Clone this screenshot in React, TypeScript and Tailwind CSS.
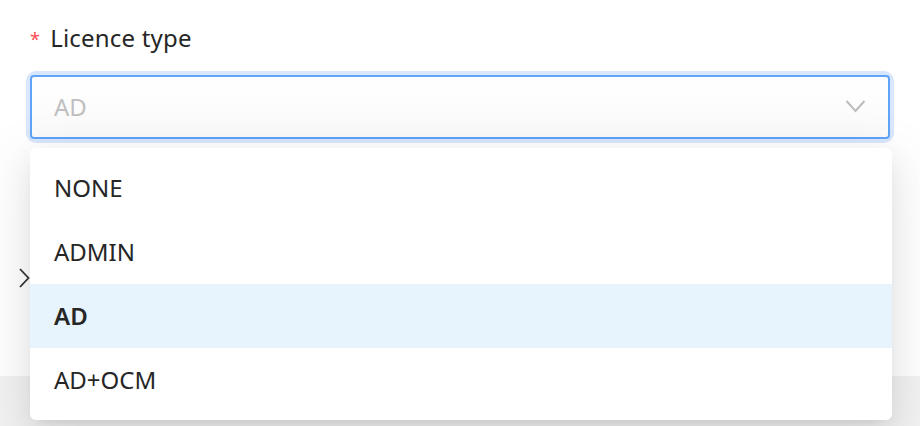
import { useState } from "react";

const options = ["NONE", "ADMIN", "AD", "AD+OCM"];

export default function App() {
  const [active] = useState("AD");

  return (
    <div
      className="relative h-[426px] w-[920px] overflow-hidden bg-white text-[#262626]"
      style={{ fontFamily: '"Noto Sans", "Open Sans", sans-serif' }}
    >
      <div className="flex h-[376px] flex-col px-[30px] pt-[22px]">
        <label className="flex h-[32px] items-center text-[24px] leading-[32px] tracking-[0.2px] text-[#262626]">
          <span className="mr-[10px] mt-[2px] text-[18px] leading-none text-[#ff4d4f]">*</span>
          Licence type
        </label>
        <div className="mt-[21px] rounded-[6px] shadow-[0_0_0_4px_#d8e7fc]">
          <div className="flex h-[64px] items-center justify-between rounded-[4px] border-2 border-[#5ea5f8] bg-gradient-to-b from-white to-[#fafafa] pl-[22px] pr-[22px]">
            <span className="text-[24px] text-[#bfbfbf]">AD</span>
            <svg width="21" height="14" viewBox="0 0 21 14" fill="none" className="-mt-[2px]">
              <path d="M1.5 2 L10.5 12 L19.5 2" stroke="#bdbdbd" strokeWidth="2" />
            </svg>
          </div>
        </div>
        <svg width="12" height="20" viewBox="0 0 12 20" fill="none" className="mt-[129px] -ml-[11px]">
          <path d="M1 1 L9.5 10 L1 19" stroke="#333" strokeWidth="1.8" />
        </svg>
      </div>
      <div className="h-[50px] bg-[#f2f2f2]" />

      <div className="absolute left-[30px] top-[148px] w-[862px] rounded-[6px] bg-white py-[8px] shadow-[0_12px_32px_0_rgba(0,0,0,0.08),0_6px_12px_-8px_rgba(0,0,0,0.12),0_18px_56px_16px_rgba(0,0,0,0.05)]">
        {options.map((opt) => (
          <div
            key={opt}
            className={
              opt === active
                ? "flex h-[64px] items-center bg-[#e8f4fd] px-[24px] text-[24px] font-semibold text-[#262626]"
                : "flex h-[64px] items-center px-[24px] text-[24px] text-[#262626]"
            }
          >
            {opt}
          </div>
        ))}
      </div>
    </div>
  );
}
